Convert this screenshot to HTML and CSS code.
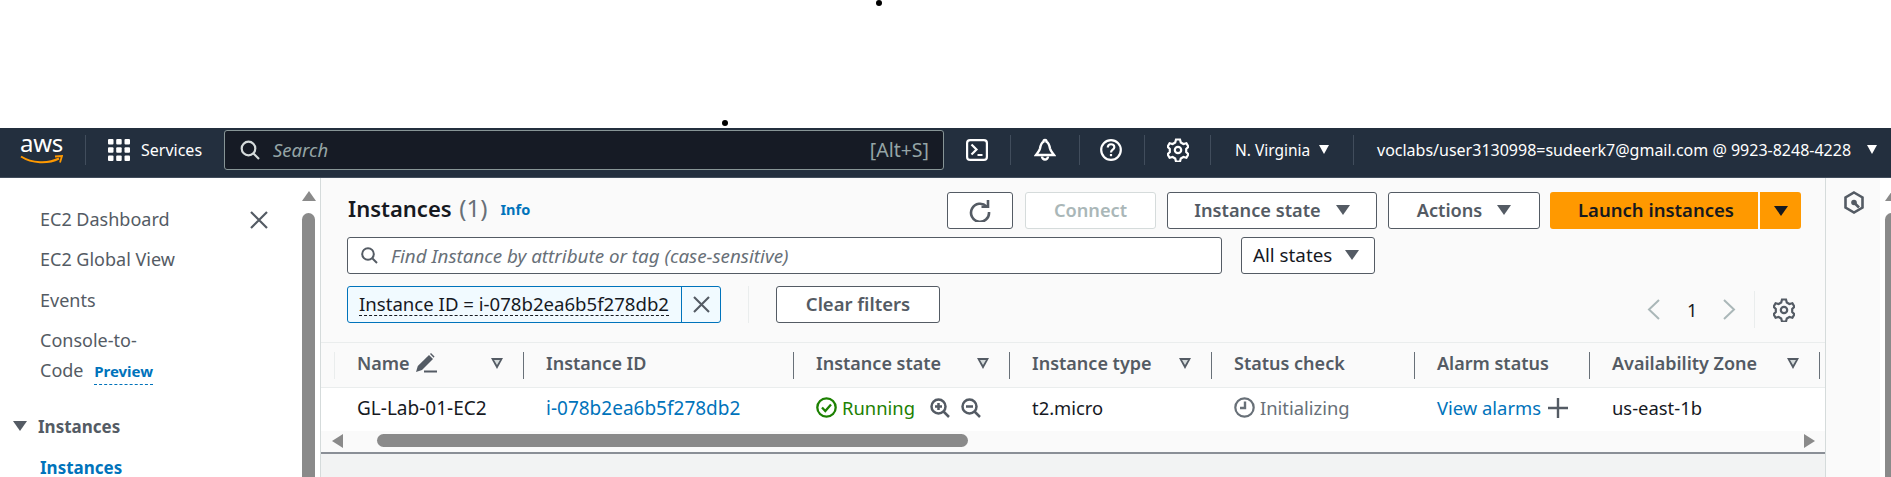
FILE: index.html
```html
<!DOCTYPE html>
<html lang="en">
<head>
    <meta charset="UTF-8">
    <title>Instances | EC2</title>
    <link rel="stylesheet" href="styles.css">
</head>
<body>
    <span class="dot dot-top"></span>
    <span class="dot dot-nav"></span>

    <header class="nav">
        <div class="logo">
            <span class="logo-text">aws</span>
            <svg class="logo-smile" width="43" height="10" viewBox="0 0 43 10"><path d="M1 1.500C12 8.500 28 9 39 3.500" fill="none" stroke="#f90" stroke-width="2"/><path d="M35 1.500L42 1 40 7.500" fill="none" stroke="#f90" stroke-width="1.800"/></svg>
        </div>
        <span class="nav-div first"></span>
        <svg class="grid-ico" width="22" height="22" viewBox="0 0 22 22" fill="#fff"><rect width="5.500" height="5.500" rx="1"/><rect x="8.200" width="5.500" height="5.500" rx="1"/><rect x="16.500" width="5.500" height="5.500" rx="1"/><rect y="8.200" width="5.500" height="5.500" rx="1"/><rect x="8.200" y="8.200" width="5.500" height="5.500" rx="1"/><rect x="16.500" y="8.200" width="5.500" height="5.500" rx="1"/><rect y="16.500" width="5.500" height="5.500" rx="1"/><rect x="8.200" y="16.500" width="5.500" height="5.500" rx="1"/><rect x="16.500" y="16.500" width="5.500" height="5.500" rx="1"/></svg>
        <span class="services">Services</span>
        <div class="search">
            <svg width="20" height="20" viewBox="0 0 20 20" fill="none" stroke="#d5dbdb" stroke-width="2.200"><circle cx="8.500" cy="8.500" r="6.800"/><path d="M13.500 13.500L19 19"/></svg>
            <span class="search-text">Search</span>
            <span class="search-key">[Alt+S]</span>
        </div>
        <svg class="nav-ico shell" width="22" height="22" viewBox="0 0 22 22" fill="none" stroke="#fff" stroke-width="2.200"><rect x="1.100" y="1.100" width="19.800" height="19.800" rx="3"/><path d="M5.500 5.500l5 5-5 5M11.500 16h5"/></svg>
        <span class="nav-div d1"></span>
        <svg class="nav-ico bell" width="22" height="24" viewBox="0 0 22 24" fill="none" stroke="#fff" stroke-width="2.400"><path d="M11 2c-1 0-1.500.8-1.500 1.700C7 5 6.500 7.500 6 10.500 5.500 13 3.500 15 2 17h18c-1.500-2-3.500-4-4-6.500-.5-3-1-5.500-3.500-6.800C12.500 2.800 12 2 11 2z"/><path d="M8 18.500a3 3 0 0 0 6 0"/></svg>
        <span class="nav-div d2"></span>
        <svg class="nav-ico help" width="22" height="22" viewBox="0 0 22 22" fill="none" stroke="#fff" stroke-width="2.200"><circle cx="11" cy="11" r="9.800"/><path d="M7.800 8.500c0-4.300 6.500-4.300 6.500-.3 0 2.500-3.300 2.500-3.300 5.300"/><path d="M11 15v2.200"/></svg>
        <span class="nav-div d3"></span>
        <svg class="nav-ico gear" width="22" height="24" viewBox="0 0 22 24" fill="none" stroke="#fff" stroke-width="2.200"><path d="M9 1.500h4l.8 3 2.600 1.500 3-.8 2 3.500-2.200 2.200v3.200l2.200 2.200-2 3.500-3-.8-2.600 1.500-.8 3H9l-.8-3-2.600-1.500-3 .8-2-3.500 2.200-2.200v-3.200L.6 8.700l2-3.500 3 .8L8.200 4.500z"/><circle cx="11" cy="12" r="3.200"/></svg>
        <span class="nav-div d4"></span>
        <span class="region">N. Virginia</span>
        <span class="caret white region-caret"></span>
        <span class="nav-div d5"></span>
        <span class="user">voclabs/user3130998=sudeerk7@gmail.com @ 9923-8248-4228</span>
        <span class="caret white user-caret"></span>
    </header>

    <div class="main">
        <aside class="side">
            <nav class="side-nav">
                <div class="side-item side-first">
                    <span>EC2 Dashboard</span>
                    <svg width="18" height="18" viewBox="0 0 18 18" stroke="#545b64" stroke-width="2.200" fill="none"><path d="M1 1l16 16M17 1L1 17"/></svg>
                </div>
                <div class="side-item">EC2 Global View</div>
                <div class="side-item">Events</div>
                <div class="side-wrap">Console-to-<br>Code <a class="preview">Preview</a></div>
                <div class="side-head"><span class="caret dark"></span>Instances</div>
                <div class="side-active">Instances</div>
            </nav>
            <div class="vbar">
                <span class="arrow-up"></span>
                <span class="vthumb"></span>
            </div>
        </aside>

        <section class="content">
            <div class="row-top">
                <h1 class="title">Instances <span class="count">(1)</span></h1>
                <a class="info">Info</a>
                <div class="actions">
                    <button class="btn btn-refresh"><svg width="22" height="23" viewBox="0 0 22 23" fill="none" stroke="#545b64" stroke-width="2.600"><path d="M17.500 7.500A9 9 0 1 0 20 13"/><path d="M12.500 7.800h6.500V1"/></svg></button>
                    <button class="btn btn-connect">Connect</button>
                    <button class="btn btn-state">Instance state<span class="caret"></span></button>
                    <button class="btn btn-actions">Actions<span class="caret"></span></button>
                    <button class="btn-launch">Launch instances</button>
                    <button class="btn-launch-caret"><span class="caret black"></span></button>
                </div>
            </div>

            <div class="row-search">
                <div class="find">
                    <svg width="17" height="17" viewBox="0 0 17 17" fill="none" stroke="#545b64" stroke-width="2"><circle cx="7" cy="7" r="5.800"/><path d="M11.500 11.500L16 16"/></svg>
                    <span>Find Instance by attribute or tag (case-sensitive)</span>
                </div>
                <div class="states">All states<span class="caret"></span></div>
            </div>

            <div class="row-filter">
                <div class="token">
                    <span class="token-text"><span class="token-label">Instance ID = i-078b2ea6b5f278db2</span></span>
                    <span class="token-x"><svg width="17" height="17" viewBox="0 0 17 17" stroke="#545b64" stroke-width="2.100" fill="none"><path d="M1 1l15 15M16 1L1 16"/></svg></span>
                </div>
                <span class="filter-div"></span>
                <button class="btn btn-clear">Clear filters</button>
                <div class="pager">
                    <svg width="13" height="21" viewBox="0 0 13 21" fill="none" stroke="#aab7b8" stroke-width="2"><path d="M12 1L2 10.500 12 20"/></svg>
                    <span class="page">1</span>
                    <svg width="13" height="21" viewBox="0 0 13 21" fill="none" stroke="#aab7b8" stroke-width="2"><path d="M1 1l10 9.500L1 20"/></svg>
                    <span class="pager-div"></span>
                    <svg width="22" height="24" viewBox="0 0 22 24" fill="none" stroke="#545b64" stroke-width="2.200"><path d="M9 1.500h4l.8 3 2.600 1.500 3-.8 2 3.500-2.200 2.200v3.200l2.200 2.200-2 3.500-3-.8-2.600 1.500-.8 3H9l-.8-3-2.600-1.500-3 .8-2-3.500 2.200-2.200v-3.200L.6 8.700l2-3.500 3 .8L8.200 4.500z"/><circle cx="11" cy="12" r="3.200"/></svg>
                </div>
            </div>

            <div class="thead">
                <div class="lead"></div>
                <div class="th">Name<svg class="pen" width="21" height="20" viewBox="0 0 21 20" fill="#545b64"><path d="M0 19l1.800-6L13 2l4 4L6 17z"/><path d="M14 1l1-1 3.500 3.500-.8 1.200z"/><rect x="8" y="17.500" width="13" height="2"/></svg><span class="tri"></span></div>
                <div class="th">Instance ID</div>
                <div class="th">Instance state<span class="tri"></span></div>
                <div class="th">Instance type<span class="tri"></span></div>
                <div class="th">Status check</div>
                <div class="th">Alarm status</div>
                <div class="th">Availability Zone<span class="tri"></span></div>
            </div>
            <div class="trow">
                <div class="lead"></div>
                <div class="td td-big">GL-Lab-01-EC2</div>
                <div class="td td-big link">i-078b2ea6b5f278db2</div>
                <div class="td running">
                    <svg width="21" height="21" viewBox="0 0 21 21" fill="none" stroke="#1d8102" stroke-width="2.300"><circle cx="10.500" cy="10.500" r="9.200"/><path d="M6 10.500l3.300 3.500 5.700-6.500"/></svg>
                    <span>Running</span>
                    <svg class="zoom-in" width="20" height="20" viewBox="0 0 20 20" fill="none" stroke="#545b64" stroke-width="2.500"><circle cx="8.500" cy="8.500" r="7"/><path d="M13.500 13.500L19 19M5 8.500h7M8.500 5v7"/></svg>
                    <svg class="zoom-out" width="20" height="20" viewBox="0 0 20 20" fill="none" stroke="#545b64" stroke-width="2.500"><circle cx="8.500" cy="8.500" r="7"/><path d="M13.500 13.500L19 19M5 8.500h7"/></svg>
                </div>
                <div class="td">t2.micro</div>
                <div class="td muted">
                    <svg width="21" height="21" viewBox="0 0 21 21" fill="none" stroke="#687078" stroke-width="2.200"><circle cx="10.500" cy="10.500" r="9.200"/><path d="M11 4.500v6.500H6" stroke-width="2.400"/></svg>
                    <span>Initializing</span>
                </div>
                <div class="td alarm">
                    <span class="link">View alarms</span>
                    <svg width="20" height="20" viewBox="0 0 20 20" stroke="#545b64" stroke-width="2.400"><path d="M0 10h20M10 0v20"/></svg>
                </div>
                <div class="td">us-east-1b</div>
            </div>
            <div class="hbar">
                <span class="arrow-left"></span>
                <span class="hthumb"></span>
                <span class="arrow-right"></span>
            </div>
            <div class="below"></div>
        </section>

        <aside class="tools">
            <svg class="tools-ico" width="20" height="23" viewBox="0 0 20 23" fill="none" stroke="#545b64" stroke-width="2.600"><path d="M10 1.500l8.500 5v10l-8.500 5-8.500-5v-10z"/><circle cx="10" cy="11.500" r="2.800" fill="#545b64" stroke="none"/><path d="M10 11.500l5 5"/></svg>
            <div class="vbar tools-bar">
                <span class="arrow-up"></span>
                <span class="vthumb"></span>
            </div>
        </aside>
    </div>
</body>
</html>
```

FILE: styles.css
```css
* {
    box-sizing: border-box;
}
html, body {
    height: 477px;
    overflow: hidden;
}
body {
    position: relative;
    margin: 0;
    padding-top: 128px;
    background-color: #fff;
    color: #16191f;
    font-family: "Noto Sans", "Liberation Sans", sans-serif;
    font-size: 18px;
}
button {
    font-family: inherit;
}

.dot {
    position: absolute;
    width: 6px;
    height: 6px;
    border-radius: 50%;
    background-color: #000;
}
.dot-top {
    left: 876px;
    top: 0;
}
.dot-nav {
    left: 722px;
    top: 120px;
}

.caret {
    display: inline-block;
    flex: none;
    width: 0;
    height: 0;
    border-left: 7px solid transparent;
    border-right: 7px solid transparent;
    border-top: 10px solid #545b64;
}
.caret.white {
    border-left-width: 5.500px;
    border-right-width: 5.500px;
    border-top: 9px solid #fff;
}
.caret.black {
    border-top-color: #16191f;
}

/* top bar */
.nav {
    display: flex;
    align-items: center;
    height: 50px;
    padding: 0 0 6px 20px;
    background-color: #232f3e;
    border-bottom: 1px solid #414d5c;
    color: #fff;
    font-size: 16px;
}
.logo {
    width: 42px;
    height: 34px;
    margin-top: -3px;
    position: relative;
}
.logo-text {
    display: block;
    font-size: 24px;
    line-height: 24px;
    letter-spacing: -.3px;
}
.logo-smile {
    position: absolute;
    left: 0;
    top: 24px;
}
.nav-div {
    flex: none;
    width: 1px;
    height: 30px;
    background-color: #414d5c;
}
.nav-div.first {
    margin-left: 23px;
}
.grid-ico {
    flex: none;
    margin-left: 22px;
}
.services {
    margin-left: 11px;
    width: 72px;
    flex: none;
}
.search {
    display: flex;
    flex: none;
    align-items: center;
    width: 720px;
    height: 40px;
    margin-left: 11px;
    padding: 0 14px 0 15px;
    background-color: #161b25;
    border: 1px solid #879596;
    border-radius: 3px;
}
.search-text {
    margin-left: 13px;
    color: #95a5a6;
    font-style: italic;
    font-size: 18.500px;
}
.search-key {
    margin-left: auto;
    color: #95a5a6;
    font-size: 19.500px;
}
.nav-ico {
    flex: none;
}
.shell {
    margin-left: 22px;
}
.d1 {
    margin-left: 22px;
}
.bell {
    margin-left: 23px;
}
.d2 {
    margin-left: 23px;
}
.help {
    margin-left: 20px;
}
.d3 {
    margin-left: 22px;
}
.gear {
    margin-left: 22px;
}
.d4 {
    margin-left: 21px;
}
.region {
    margin-left: 24px;
    width: 75px;
    flex: none;
    font-size: 15.500px;
    white-space: nowrap;
}
.region-caret {
    margin-left: 9px;
}
.d5 {
    margin-left: 24px;
}
.user {
    margin-left: 23px;
    width: 483px;
    flex: none;
    white-space: nowrap;
}
.user-caret {
    margin-left: 7px;
}

.main {
    display: flex;
    height: 299px;
    overflow: hidden;
}

/* left navigation */
.side {
    display: flex;
    flex: none;
    width: 321px;
    border-right: 1px solid #d5dbdb;
    background-color: #fff;
    color: #545b64;
    font-size: 18px;
}
.side-nav {
    width: 301px;
    padding: 21px 33px 0 40px;
}
.side-item {
    height: 41px;
    line-height: 39px;
}
.side-first {
    display: flex;
    justify-content: space-between;
    align-items: center;
}
.side-wrap {
    line-height: 30px;
    margin-top: 3px;
}
.preview {
    margin-left: 6px;
    color: #0073bb;
    font-size: 15px;
    font-weight: 700;
    padding-bottom: 3px;
    border-bottom: 1px dashed #0073bb;
}
.side-head {
    display: flex;
    align-items: center;
    gap: 11px;
    margin: 20px 0 0 -27px;
    height: 40px;
    font-size: 17px;
    font-weight: 700;
}
.side-active {
    margin-top: 14px;
    line-height: 16px;
    font-size: 17px;
    color: #0073bb;
    font-weight: 700;
}
.vbar {
    display: flex;
    flex-direction: column;
    align-items: center;
    width: 15px;
    padding-top: 13px;
}
.arrow-up {
    width: 0;
    height: 0;
    border-left: 7.500px solid transparent;
    border-right: 7.500px solid transparent;
    border-bottom: 10px solid #8a8a8a;
}
.vthumb {
    width: 13px;
    flex: 1;
    margin-top: 12px;
    border-radius: 7px 7px 0 0;
    background-color: #8a8a8a;
}

/* instances panel */
.content {
    display: flex;
    flex-direction: column;
    width: 1505px;
    flex: none;
    background-color: #fafafa;
    border-right: 1px solid #d5dbdb;
}
.row-top {
    display: flex;
    align-items: center;
    height: 37px;
    margin-top: 14px;
    padding: 0 24px 0 27px;
}
.title {
    margin: 0 0 6px;
    font-size: 22px;
    font-weight: 600;
    color: #16191f;
    white-space: nowrap;
}
.count {
    margin-left: 2px;
    font-size: 24px;
    font-weight: 400;
    color: #687078;
}
.info {
    margin: 0 0 3px 13px;
    color: #0073bb;
    font-size: 14.500px;
    font-weight: 700;
}
.actions {
    display: flex;
    margin-left: auto;
}
.btn {
    display: flex;
    align-items: center;
    justify-content: center;
    height: 37px;
    padding: 0 0 2px;
    background-color: #fff;
    border: 1px solid #545b64;
    border-radius: 3px;
    color: #545b64;
    font-size: 18.200px;
    font-weight: 600;
}
.btn-refresh {
    width: 66px;
    padding: 0;
}
.btn-connect {
    width: 131px;
    margin-left: 12px;
    border-color: #d5dbdb;
    color: #aab7b8;
}
.btn-state {
    width: 210px;
    margin-left: 11px;
    gap: 15px;
}
.btn-actions {
    width: 152px;
    margin-left: 11px;
    gap: 15px;
}
.btn-launch {
    width: 208px;
    height: 37px;
    margin-left: 10px;
    padding: 0 0 2px 4px;
    background-color: #f90;
    border: 0;
    border-radius: 3px 0 0 3px;
    color: #16191f;
    font-size: 18.500px;
    font-weight: 600;
}
.btn-launch-caret {
    display: flex;
    align-items: center;
    justify-content: center;
    width: 41px;
    height: 37px;
    margin-left: 2px;
    padding: 0;
    background-color: #f90;
    border: 0;
    border-radius: 0 3px 3px 0;
}
.row-search {
    display: flex;
    margin-top: 8px;
    padding-left: 26px;
}
.find {
    display: flex;
    align-items: center;
    gap: 13px;
    width: 875px;
    height: 37px;
    padding-left: 13px;
    background-color: #fff;
    border: 1px solid #545b64;
    border-radius: 3px;
    color: #687078;
    font-style: italic;
    font-size: 18.800px;
}
.states {
    display: flex;
    align-items: center;
    justify-content: space-between;
    width: 134px;
    height: 37px;
    margin-left: 19px;
    padding: 0 15px 2px 11px;
    background-color: #fff;
    border: 1px solid #545b64;
    border-radius: 3px;
    color: #16191f;
    font-size: 18.800px;
}
.row-filter {
    display: flex;
    align-items: center;
    height: 37px;
    margin-top: 12px;
    padding-left: 26px;
}
.token {
    display: flex;
    width: 374px;
    height: 37px;
    background-color: #f1faff;
    border: 1px solid #0073bb;
    border-radius: 3px;
}
.token-text {
    display: flex;
    align-items: center;
    width: 334px;
    padding-left: 11px;
    border-right: 1px solid #0073bb;
    color: #16191f;
    font-size: 18.600px;
    white-space: nowrap;
}
.token-label {
    line-height: 22px;
    border-bottom: 1px dashed #16191f;
}
.token-x {
    display: flex;
    align-items: center;
    justify-content: center;
    flex: 1;
}
.filter-div {
    width: 1px;
    height: 37px;
    margin-left: 27px;
    background-color: #eaeded;
}
.btn-clear {
    width: 164px;
    margin-left: 27px;
    font-size: 18.500px;
}
.pager {
    display: flex;
    align-items: center;
    margin: 10px 0 0 707px;
}
.page {
    margin: 0 26px 0 27px;
    font-size: 18px;
    color: #16191f;
    width: 10px;
}
.pager-div {
    width: 1px;
    height: 37px;
    margin: 0 18px;
    background-color: #eaeded;
}

/* table */
.thead, .trow {
    display: grid;
    grid-template-columns: 14px 189px 270px 216px 202px 203px 175px 230px;
}
.thead {
    align-items: center;
    height: 46px;
    margin-top: 19px;
    background-color: #fafafa;
    border-top: 1px solid #eaeded;
    border-bottom: 1px solid #eaeded;
    color: #545b64;
    font-weight: 600;
    font-size: 18px;
}
.lead {
    height: 27px;
    border-right: 1px solid #eaeded;
}
.trow .lead {
    border: 0;
}
.th {
    display: flex;
    align-items: center;
    height: 27px;
    padding: 0 20px 4px 22px;
    border-right: 1px solid #687078;
    white-space: nowrap;
}
.pen {
    margin-left: 6px;
}
.tri {
    position: relative;
    width: 0;
    height: 0;
    margin-left: auto;
    border-left: 6.500px solid transparent;
    border-right: 6.500px solid transparent;
    border-top: 11px solid #545b64;
}
.tri::after {
    content: "";
    position: absolute;
    left: -3px;
    top: -8.500px;
    border-left: 3px solid transparent;
    border-right: 3px solid transparent;
    border-top: 5px solid #d5dbdb;
}
.trow {
    align-items: center;
    height: 43px;
    background-color: #fff;
}
.td {
    display: flex;
    align-items: center;
    padding: 0 0 4px 22px;
    font-size: 18.400px;
    white-space: nowrap;
}
.td-big {
    font-size: 19px;
}
.link {
    color: #0073bb;
}
.running {
    color: #1d8102;
    gap: 5px;
}
.running svg {
    flex: none;
}
.zoom-in {
    margin-left: 10px;
}
.zoom-out {
    margin-left: 6px;
}
.muted {
    color: #687078;
    gap: 5px;
}
.alarm {
    gap: 7px;
}
.hbar {
    display: flex;
    align-items: center;
    height: 23px;
    padding: 0 10px 2px 11px;
    background-color: #fafafa;
    border-bottom: 2px solid #8a8f96;
}
.arrow-left {
    width: 0;
    height: 0;
    border-top: 7px solid transparent;
    border-bottom: 7px solid transparent;
    border-right: 11px solid #8a8a8a;
}
.arrow-right {
    width: 0;
    height: 0;
    margin-left: auto;
    border-top: 7px solid transparent;
    border-bottom: 7px solid transparent;
    border-left: 11px solid #8a8a8a;
}
.hthumb {
    width: 591px;
    height: 13px;
    margin-left: 34px;
    border-radius: 7px;
    background-color: #8a8a8a;
}
.below {
    flex: 1;
    background-color: #f2f3f3;
}

/* right rail */
.tools {
    display: flex;
    flex: 1;
    background: linear-gradient(to right, #fafafa 54px, #fff 54px);
}
.tools-ico {
    margin: 13px 0 0 18px;
}
.tools-bar {
    margin-left: 20px;
}
```
